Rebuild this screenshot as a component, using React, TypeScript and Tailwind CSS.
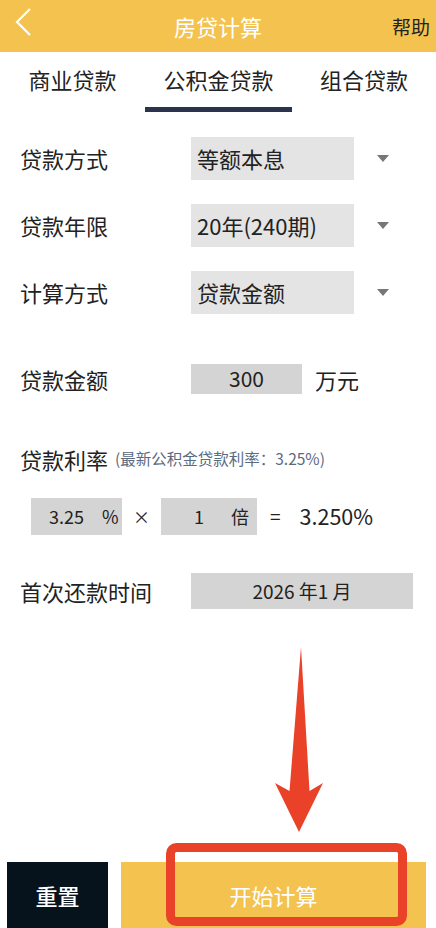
import React from "react";

const font = { fontFamily: '"Noto Sans CJK SC", "Noto Sans", sans-serif' };

function Caret() {
  return (
    <svg width="12" height="7" viewBox="0 0 12 7" className="ml-[23px]">
      <polygon points="0,0 12,0 6,7" fill="#777777" />
    </svg>
  );
}

function SelectRow({ label, value }: { label: string; value: string }) {
  return (
    <div className="flex items-center h-[43px]">
      <div className="w-[171px] text-[22px] text-[#222]">{label}</div>
      <div className="w-[163px] h-full bg-[#e4e4e4] flex items-center pl-[6px] text-[22px] text-[#222]">
        {value}
      </div>
      <Caret />
    </div>
  );
}

export default function App() {
  return (
    <div
      className="relative w-[436px] h-[928px] bg-white flex flex-col overflow-hidden"
      style={font}
    >
      {/* top bar */}
      <div className="relative h-[52px] bg-[#f4c24f] flex items-center justify-center">
        <svg
          width="20"
          height="32"
          viewBox="0 0 20 32"
          className="absolute left-[13px] top-[6px]"
        >
          <polyline
            points="17,3 4,16 17,29"
            fill="none"
            stroke="#ffffff"
            strokeWidth="2.2"
          />
        </svg>
        <span className="text-white text-[22px] leading-none">房贷计算</span>
        <span className="absolute right-[6px] text-[19px] text-[#222] leading-none">
          帮助
        </span>
      </div>

      {/* tabs */}
      <div className="grid grid-cols-[145px_147px_1fr] h-[60px] text-[22px] text-[#222]">
        <div className="flex items-center justify-center pb-[5px]">商业贷款</div>
        <div className="flex items-center justify-center border-b-[5px] border-[#2b344c]">
          公积金贷款
        </div>
        <div className="flex items-center justify-center pb-[5px]">组合贷款</div>
      </div>

      {/* form */}
      <div className="px-[20px] flex flex-col">
        <div className="mt-[25px] flex flex-col gap-[24px]">
          <SelectRow label="贷款方式" value="等额本息" />
          <SelectRow label="贷款年限" value="20年(240期)" />
          <SelectRow label="计算方式" value="贷款金额" />
        </div>

        <div className="mt-[50px] flex items-center h-[30px]">
          <div className="w-[171px] text-[22px] text-[#222]">贷款金额</div>
          <div className="w-[111px] h-full bg-[#d4d4d4] flex items-center justify-center text-[21px] text-[#222]">
            300
          </div>
          <div className="ml-[13px] text-[22px] text-[#222]">万元</div>
        </div>

        <div className="mt-[51px] flex items-center h-[28px]">
          <span className="text-[22px] text-[#222]">贷款利率</span>
          <span className="ml-[7px] text-[15.5px] text-[#5b6a7f]">
            (最新公积金贷款利率：3.25%)
          </span>
        </div>

        <div className="mt-[25px] flex items-center h-[37px]">
          <div className="ml-[11px] w-[91px] h-full bg-[#d4d4d4] flex items-center text-[18px] text-[#222]">
            <span className="ml-[18px]">3.25</span>
            <span className="ml-[18px]">%</span>
          </div>
          <span className="ml-[11px] text-[17px] text-[#222]">×</span>
          <div className="ml-[11px] w-[96px] h-full bg-[#d4d4d4] flex items-center text-[18px] text-[#222]">
            <span className="ml-[33px]">1</span>
            <span className="ml-[27px]">倍</span>
          </div>
          <span className="ml-[13px] text-[19px] text-[#222]">=</span>
          <span className="ml-[19px] text-[21.5px] text-[#222]">3.250%</span>
        </div>

        <div className="mt-[38px] flex items-center h-[36px]">
          <div className="w-[171px] text-[22px] text-[#222]">首次还款时间</div>
          <div className="w-[222px] h-full bg-[#d4d4d4] flex items-center justify-center text-[19px] text-[#222]">
            2026 年1 月
          </div>
        </div>
      </div>

      {/* bottom actions */}
      <div className="mt-auto flex h-[66px] pl-[7px] pr-[10px] gap-[13px]">
        <button className="w-[101px] h-full bg-[#06131c] text-white text-[22px] font-medium">
          重置
        </button>
        <button className="flex-1 h-full bg-[#f4c24f] text-white text-[22px]">
          开始计算
        </button>
      </div>

      {/* callout arrow and frame */}
      <svg
        className="absolute inset-0 pointer-events-none"
        width="436"
        height="928"
        viewBox="0 0 436 928"
      >
        <polygon
          points="301,647 309.5,791 323,783 299,832 275,783 289.5,791"
          fill="#ea4229"
        />
        <rect
          x="170.5"
          y="847.5"
          width="232"
          height="74"
          rx="6"
          fill="none"
          stroke="#ea4229"
          strokeWidth="9"
        />
      </svg>
    </div>
  );
}
